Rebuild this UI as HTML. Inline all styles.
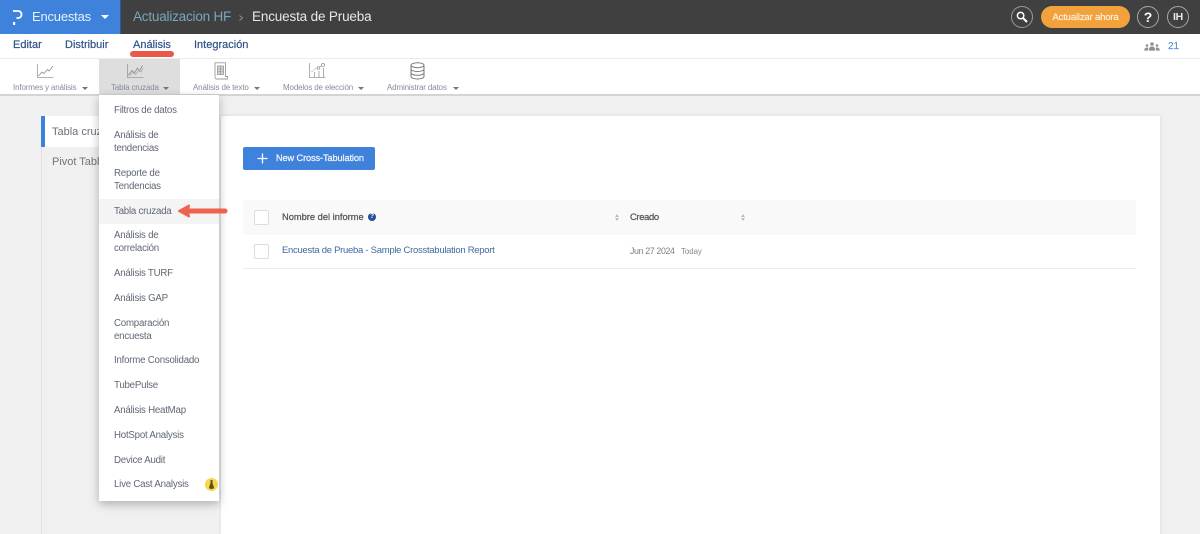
<!DOCTYPE html>
<html lang="es"><head><meta charset="utf-8"><title>Tabla cruzada</title>
<style>
html,body{margin:0;padding:0}
body{width:1200px;height:534px;overflow:hidden;position:relative;background:#f0f0f0;font-family:"Liberation Sans",sans-serif;}
.a{position:absolute;white-space:nowrap}
.nav{top:39px;font-size:11px;line-height:13px;color:#2f5288;-webkit-text-stroke:.2px #2f5288}
.tl{top:82px;font-size:8px;line-height:11px;color:#858d9a;letter-spacing:-.15px}
.car{position:absolute;width:0;height:0;border-left:3px solid transparent;border-right:3px solid transparent;border-top:3px solid #6f7680;top:87px}
.mi{left:114px;font-size:9.7px;line-height:13px;color:#5f6776;white-space:nowrap;position:absolute;letter-spacing:-.22px}
svg{position:absolute;overflow:visible}
.cb{position:absolute;left:254px;width:13px;height:13px;background:#fff;border:1px solid #dcdcdc;border-radius:2px}
.sort{position:absolute;width:5px;height:7px}
.sort:before,.sort:after{content:"";position:absolute;left:0;width:0;height:0;border-left:2.5px solid transparent;border-right:2.5px solid transparent}
.sort:before{top:0;border-bottom:3px solid #bcbcbc}
.sort:after{bottom:0;border-top:3px solid #bcbcbc}
.hd{font-size:9.3px;line-height:12px;color:#555;-webkit-text-stroke:.25px #555}
</style></head><body>

<!-- top bar -->
<div class="a" style="left:0;top:0;width:1200px;height:34px;background:#404040"></div>
<div class="a" style="left:0;top:0;width:120px;height:34px;background:#3f82dc;border-right:1px solid #2a5a9c"></div>
<svg style="left:13px;top:10px" width="9" height="15" viewBox="0 0 9 15"><path d="M0 1H5C7.500 1 8.500 2.800 8.500 4.500C8.500 6.500 7.300 8 5 8H3.500" fill="none" stroke="#fff" stroke-width="1.800"/><rect x="0" y="12" width="2.200" height="3" fill="#fff"/></svg>
<div class="a" style="left:32px;top:9px;font-size:13px;line-height:16px;color:#e8f0fb;letter-spacing:-.2px">Encuestas</div>
<div class="a" style="left:101px;top:15px;width:0;height:0;border-left:4.500px solid transparent;border-right:4.500px solid transparent;border-top:4.500px solid #fff"></div>
<div class="a" style="left:133px;top:9px;font-size:13.500px;line-height:16px;color:#79a6bd;letter-spacing:-.2px">Actualizacion HF</div>
<svg style="left:238px;top:13px" width="7" height="10" viewBox="0 0 7 10"><path d="M1.500 2.500L4.500 5L1.500 7.500" fill="none" stroke="#8a8a8a" stroke-width="1.100"/></svg>
<div class="a" style="left:252px;top:9px;font-size:13.500px;line-height:16px;color:#e8e8e8;letter-spacing:-.16px">Encuesta de Prueba</div>

<div class="a" style="left:1011px;top:6px;width:20px;height:20px;border:1px solid #9a9a9a;border-radius:50%"></div>
<svg style="left:1016px;top:11px" width="12" height="12" viewBox="0 0 12 12"><circle cx="4.600" cy="4.600" r="3.200" fill="none" stroke="#fff" stroke-width="1.500"/><path d="M7 7L11 11" stroke="#fff" stroke-width="2"/></svg>
<div class="a" style="left:1041px;top:6px;width:89px;height:22px;background:#f2a23c;border-radius:11px;color:#fdf3e3;font-size:9.600px;line-height:23px;text-align:center;letter-spacing:-.2px;-webkit-text-stroke:.15px #fdf3e3">Actualizar ahora</div>
<div class="a" style="left:1137px;top:6px;width:20px;height:20px;border:1px solid #a8a8a8;border-radius:50%;color:#fff;font-weight:bold;font-size:14px;line-height:21px;text-align:center">?</div>
<div class="a" style="left:1167px;top:6px;width:20px;height:20px;border:1px solid #a8a8a8;border-radius:50%;color:#e8e8e8;font-weight:bold;font-size:10.500px;line-height:21px;text-align:center;letter-spacing:-.2px">IH</div>

<!-- nav row -->
<div class="a" style="left:0;top:34px;width:1200px;height:24px;background:#fff;border-bottom:1px solid #ececec"></div>
<div class="a nav" style="left:13px">Editar</div>
<div class="a nav" style="left:65px">Distribuir</div>
<div class="a nav" style="left:133px">Análisis</div>
<div class="a nav" style="left:194px">Integración</div>
<div class="a" style="left:130px;top:51px;width:44px;height:6px;background:#e9594a;border-radius:3px"></div>
<svg style="left:1144px;top:42px" width="16" height="9" viewBox="0 0 16 9"><g fill="#8b8f96"><circle cx="8" cy="2" r="1.800"/><path d="M4.800 8.600C4.800 5.800 6 4.500 8 4.500S11.200 5.800 11.200 8.600Z"/><circle cx="3" cy="3.500" r="1.300"/><path d="M0.300 8.600C0.300 6.600 1.200 5.500 3 5.500C3.700 5.500 4.200 5.700 4.300 6L3.800 8.600Z"/><circle cx="13" cy="3.500" r="1.300"/><path d="M15.700 8.600C15.700 6.600 14.800 5.500 13 5.500C12.300 5.500 11.800 5.700 11.700 6L12.200 8.600Z"/></g></svg>
<div class="a" style="left:1168px;top:41px;font-size:10px;line-height:11px;color:#5c8fd6;-webkit-text-stroke:.15px #5c8fd6">21</div>

<!-- toolbar -->
<div class="a" style="left:0;top:59px;width:1200px;height:35px;background:#fff;border-bottom:2px solid #d4d4d4"></div>
<div class="a" style="left:99px;top:59px;width:81px;height:35px;background:#dedede"></div>

<svg style="left:37px;top:64px" width="17" height="14" viewBox="0 0 17 14"><path d="M0.500 0V13.500H16.500" fill="none" stroke="#9a9a9a" stroke-width=".8"/><path d="M1.500 12L5 8L7 9.500L10.500 5.500L12 7L16 2" fill="none" stroke="#8c8c8c" stroke-width=".8"/></svg>
<div class="a tl" style="left:13px">Informes y análisis</div><div class="car" style="left:82px"></div>

<svg style="left:127px;top:64px" width="17" height="14" viewBox="0 0 17 14"><path d="M0.500 0V13.500H16.500" fill="none" stroke="#999" stroke-width=".8"/><path d="M1.500 11L5 6.500L7.500 9L10.500 4L12.500 7L15.500 1.500" fill="none" stroke="#8c8c8c" stroke-width=".8"/><path d="M2 12L6 8.500L8.500 10.500L12 6L14 8L16 4" fill="none" stroke="#a4a4a4" stroke-width=".7"/></svg>
<div class="a tl" style="left:111px">Tabla cruzada</div><div class="car" style="left:163px"></div>

<svg style="left:214px;top:62px" width="14" height="18" viewBox="0 0 14 18"><path d="M1 .8H11.500V14.500H13.500V17H2.800C1.500 17 1 16 1 15Z" fill="none" stroke="#9a9a9a" stroke-width=".9"/><path d="M3.500 4H9.500V12.500H3.500Z" fill="#d8d8d8" stroke="#8c8c8c" stroke-width=".7"/><path d="M6.500 4V12.500M3.500 7H9.500M3.500 9.800H9.500" stroke="#8c8c8c" stroke-width=".6"/></svg>
<div class="a tl" style="left:193px">Análisis de texto</div><div class="car" style="left:254px"></div>

<svg style="left:309px;top:63px" width="17" height="15" viewBox="0 0 17 15"><path d="M0.500 0V14.500H16.500" fill="none" stroke="#9a9a9a" stroke-width=".8"/><path d="M2.500 9L6 6L10 4.500L14 1.500" fill="none" stroke="#9a9a9a" stroke-width=".7" stroke-dasharray="1.500 1"/><circle cx="14" cy="2" r="1.500" fill="#fff" stroke="#8c8c8c" stroke-width=".7"/><circle cx="9.500" cy="5" r="1.300" fill="#fff" stroke="#8c8c8c" stroke-width=".7"/><path d="M5.500 14V9M10 14V8M14.500 14V5" stroke="#9a9a9a" stroke-width=".8"/></svg>
<div class="a tl" style="left:283px">Modelos de elección</div><div class="car" style="left:358px"></div>

<svg style="left:410px;top:62px" width="15" height="18" viewBox="0 0 15 18"><g fill="none" stroke="#7a7a7a" stroke-width="1"><ellipse cx="7.500" cy="3.200" rx="6.500" ry="2.500"/><path d="M1 3.200V14.500C1 16 4 17 7.500 17S14 16 14 14.500V3.200"/><path d="M1 7C1 8.500 4 9.500 7.500 9.500S14 8.500 14 7"/><path d="M1 10.800C1 12.300 4 13.300 7.500 13.300S14 12.300 14 10.800"/></g></svg>
<div class="a tl" style="left:387px">Administrar datos</div><div class="car" style="left:453px"></div>

<!-- left tabs -->
<div class="a" style="left:41px;top:116px;width:180px;height:418px;background:#f0f0f0;border-left:1px solid #e2e2e2;box-sizing:border-box"></div>
<div class="a" style="left:41px;top:116px;width:60px;height:31px;background:#fff;border-left:4px solid #3f82dc;box-sizing:border-box"></div>
<div class="a" style="left:52px;top:126px;font-size:11px;line-height:13px;color:#6a6f78">Tabla cruz</div>
<div class="a" style="left:52px;top:156px;font-size:11px;line-height:13px;color:#6f747c">Pivot Table</div>

<!-- main card -->
<div class="a" style="left:221px;top:116px;width:939px;height:418px;background:#fff;box-shadow:0 0 2px 1px #e2e2e2"></div>
<div class="a" style="left:243px;top:147px;width:132px;height:23px;background:#3f82dc;border-radius:2px"></div>
<svg style="left:257px;top:153px" width="11" height="11" viewBox="0 0 11 11"><path d="M5.500 .5V10.500M.5 5.500H10.500" stroke="#fff" stroke-width="1.300"/></svg>
<div class="a" style="left:276px;top:152px;font-size:9.200px;line-height:12px;color:#f0f5fc;letter-spacing:-.1px;-webkit-text-stroke:.25px #f0f5fc">New Cross-Tabulation</div>

<div class="a" style="left:243px;top:200px;width:893px;height:35px;background:#f9f9f9"></div>
<div class="cb" style="top:210px"></div>
<div class="a hd" style="left:282px;top:211px">Nombre del informe</div>
<svg style="left:368px;top:213px" width="8" height="8" viewBox="0 0 8 8"><circle cx="4" cy="4" r="4" fill="#224f96"/></svg>
<div class="a" style="left:368px;top:213px;width:8px;text-align:center;font-size:7px;line-height:8px;color:#fff;font-weight:bold">?</div>
<div class="sort" style="left:615px;top:214px"></div>
<div class="a hd" style="left:630px;top:211px;letter-spacing:-.3px">Creado</div>
<div class="sort" style="left:741px;top:214px"></div>

<div class="a" style="left:243px;top:268px;width:893px;height:1px;background:#ececec"></div>
<div class="cb" style="top:244px"></div>
<div class="a" style="left:282px;top:245px;font-size:9.500px;line-height:12px;color:#3f6a9f;letter-spacing:-.28px">Encuesta de Prueba - Sample Crosstabulation Report</div>
<div class="a" style="left:630px;top:245px;font-size:8.800px;line-height:12px;color:#808080;letter-spacing:-.35px">Jun 27 2024</div>
<div class="a" style="left:681px;top:246px;font-size:7.800px;line-height:11px;color:#888">Today</div>

<!-- dropdown -->
<div class="a" style="left:99px;top:95px;width:120px;height:406px;background:#fff;box-shadow:0 3px 9px rgba(0,0,0,.28)"></div>
<div class="a" style="left:99px;top:199px;width:120px;height:25px;background:#f4f4f4"></div>
<div class="mi" style="top:104px">Filtros de datos</div>
<div class="mi" style="top:129px">Análisis de<br>tendencias</div>
<div class="mi" style="top:167px">Reporte de<br>Tendencias</div>
<div class="mi" style="top:205px">Tabla cruzada</div>
<div class="mi" style="top:229px">Análisis de<br>correlación</div>
<div class="mi" style="top:267px">Análisis TURF</div>
<div class="mi" style="top:292px">Análisis GAP</div>
<div class="mi" style="top:317px">Comparación<br>encuesta</div>
<div class="mi" style="top:354px">Informe Consolidado</div>
<div class="mi" style="top:379px">TubePulse</div>
<div class="mi" style="top:404px">Análisis HeatMap</div>
<div class="mi" style="top:429px">HotSpot Analysis</div>
<div class="mi" style="top:454px">Device Audit</div>
<div class="mi" style="top:478px">Live Cast Analysis</div>
<div class="a" style="left:205px;top:478px;width:13px;height:13px;background:#f6d64a;border-radius:50%"></div>
<svg style="left:209px;top:480px" width="5" height="9" viewBox="0 0 5 9"><path d="M1.500 0H3.500V3L5 7.500C5 8.500 4 9 2.500 9S0 8.500 0 7.500L1.500 3Z" fill="#5e4f1c"/></svg>

<!-- red arrow -->
<svg style="left:176px;top:203px" width="52" height="16" viewBox="0 0 52 16"><path d="M13 8H49" stroke="#ee6350" stroke-width="5" stroke-linecap="round"/><path d="M3 8L13 2.500L12 8L13 13.500Z" fill="#ee6350" stroke="#ee6350" stroke-width="2" stroke-linejoin="round"/></svg>

</body></html>
